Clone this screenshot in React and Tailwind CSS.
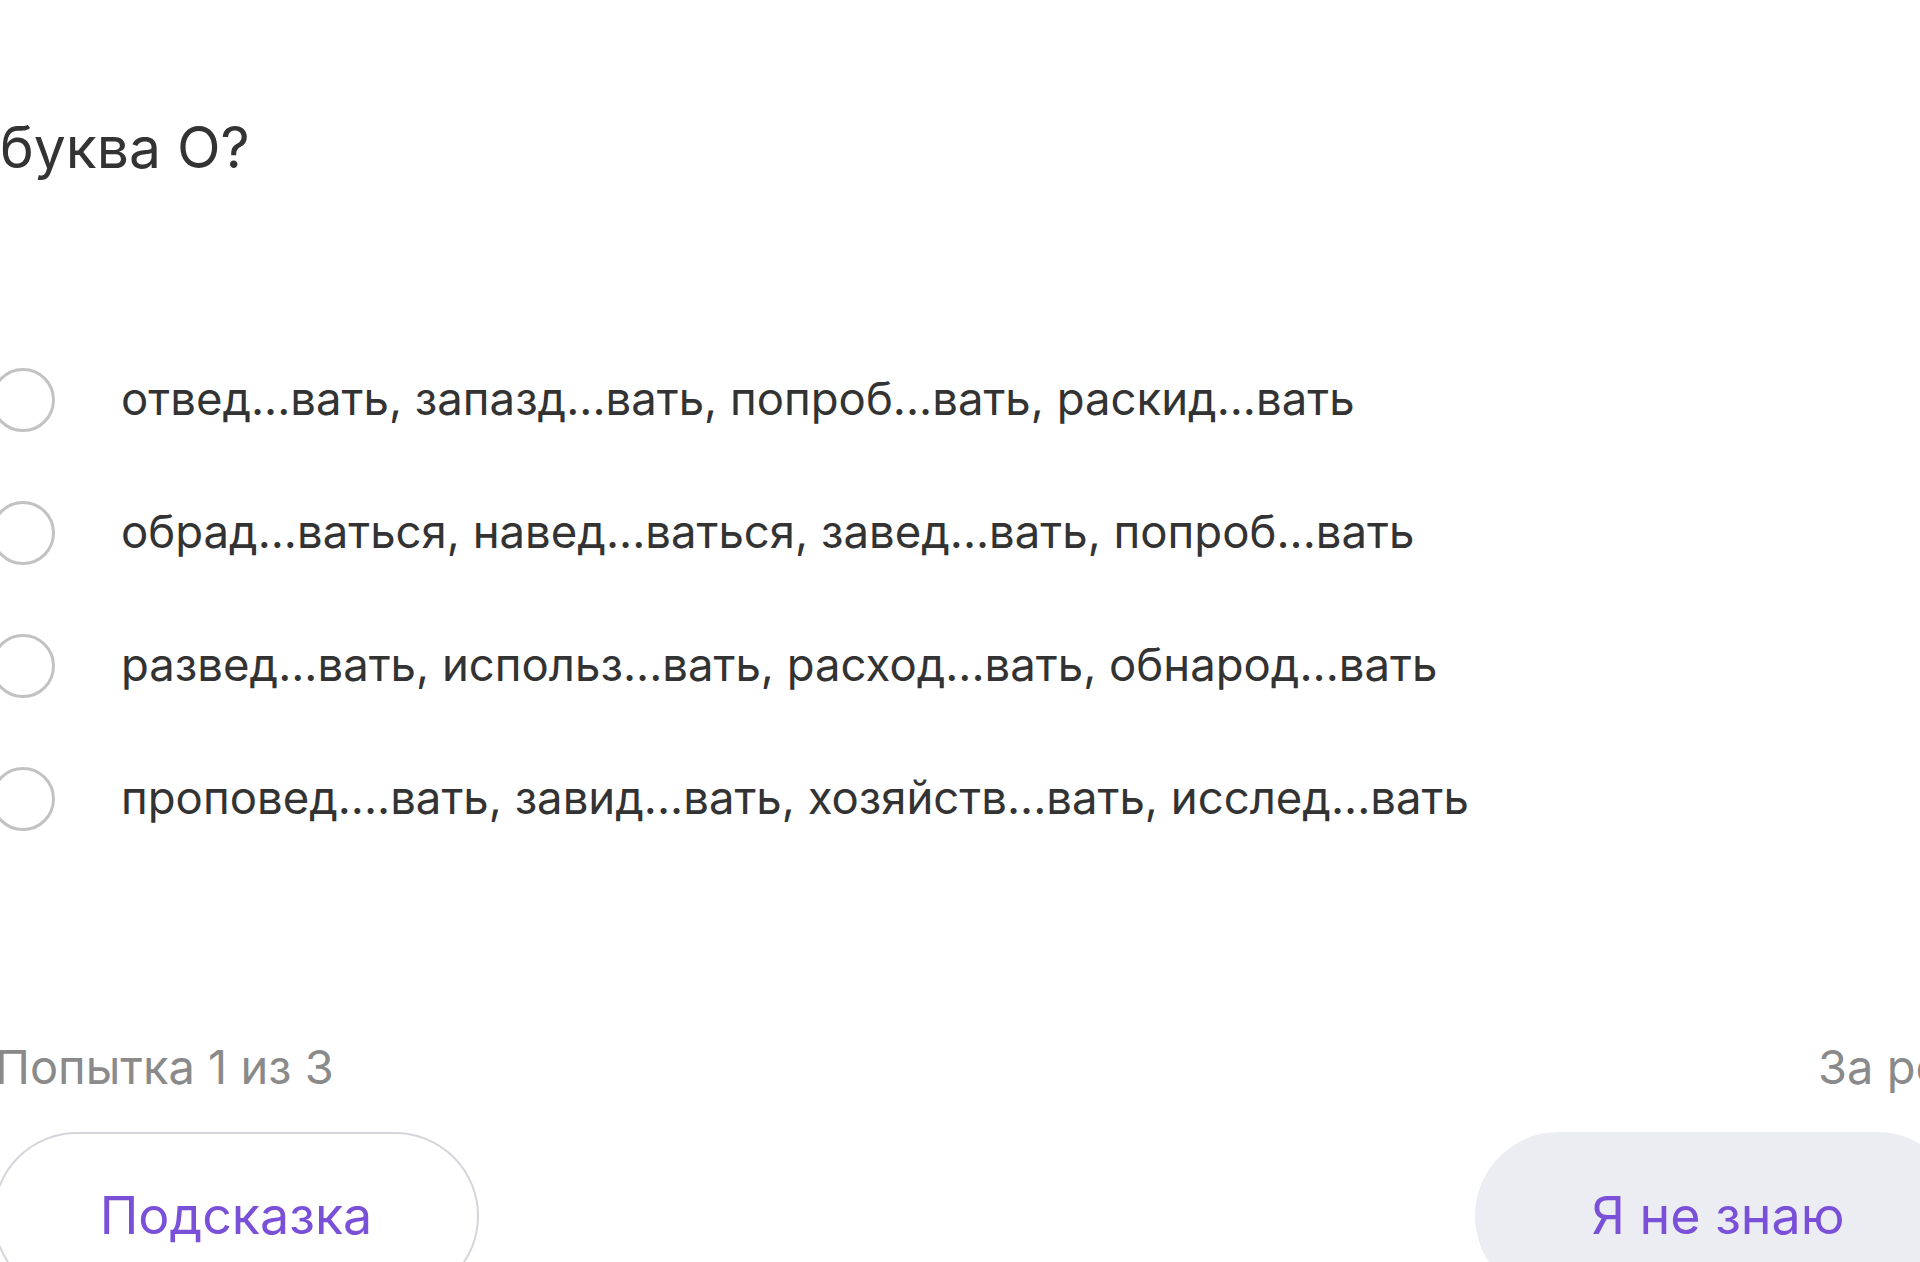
import React from 'react';

const options = [
  'отвед...вать, запазд...вать, попроб...вать, раскид...вать',
  'обрад...ваться, навед...ваться, завед...вать, попроб...вать',
  'развед...вать, использ...вать, расход...вать, обнарод...вать',
  'проповед....вать, завид...вать, хозяйств...вать, исслед...вать',
];

export default function App() {
  return (
    <div className="w-[1920px] h-[1262px] overflow-hidden bg-white font-['Inter',sans-serif] text-[#333333]">
      <h1 className="pt-[113px] text-[57px] leading-[70px] font-normal whitespace-nowrap">буква О?</h1>

      {/* варианты ответа */}
      <ul className="mt-[150px] flex flex-col">
        {options.map((text) => (
          <li key={text} className="h-[133px] flex items-center">
            <span className="-ml-[9px] w-[64px] h-[64px] shrink-0 rounded-full border-[3px] border-[#c2c2c2]" />
            <span className="ml-[66px] text-[45.5px] whitespace-nowrap">{text}</span>
          </li>
        ))}
      </ul>

      <div className="mt-[174px] flex items-baseline whitespace-nowrap text-[47px] leading-[56px] text-[#8a8a8a]">
        <span className="-ml-[5px]">Попытка 1 из 3</span>
        <span className="ml-auto w-[102px] shrink-0">За решение задания</span>
      </div>

      <div className="mt-[37px] flex justify-between">
        <button className="-ml-[7px] w-[486px] h-[168px] rounded-full border-2 border-[#d4d6db] bg-white text-[52px] text-[#7a50d8]">
          Подсказка
        </button>
        <button className="-mr-[41px] w-[486px] h-[168px] rounded-full bg-[#ecedf2] text-[52px] text-[#7a50d8]">
          Я не знаю
        </button>
      </div>
    </div>
  );
}
